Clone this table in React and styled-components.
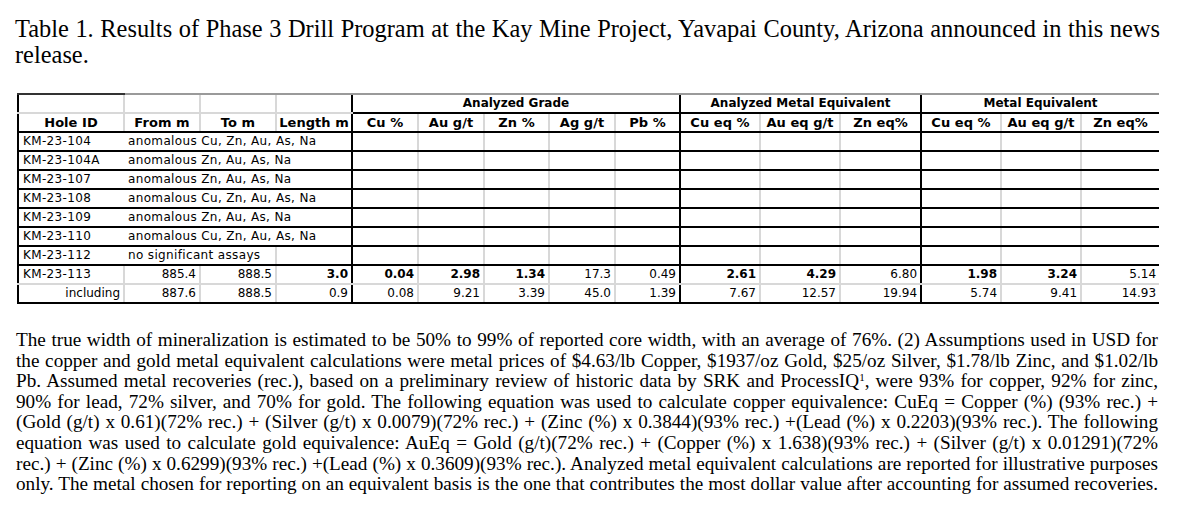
import React from 'react';
import styled, { createGlobalStyle } from 'styled-components';

const GlobalStyle = createGlobalStyle`
  body {
    margin: 0;
    background: #fff;
  }
`;

const LINE = {
  black: '2px solid #000',
  gray: '2px solid #d8d8d8',
  top: '2px solid #9a9a9a',
  dark: '2px solid #333',
  none: 'none',
};

// left border of each column: thick black at group edges, light grid elsewhere
const COL_LEFT = ['black', 'gray', 'gray', 'gray', 'black', 'gray', 'gray', 'gray', 'gray', 'black', 'gray', 'gray', 'black', 'gray', 'gray'];
const COL_WIDTHS = [106, 76, 76, 76, 66, 66, 65, 66, 65, 80, 80, 81, 80, 80, 78];

const Page = styled.div`
  width: 1183px;
  box-sizing: border-box;
  padding: 16px 0 0 15px;
  font-family: "Liberation Serif", "Times New Roman", serif;
  color: #000;
`;

const Caption = styled.div`
  width: 1145px;
  margin: 0 0 25px;
  font-size: 24.4px;
  line-height: 26px;
`;

// a printed line that is stretched to the full measure, as in the source document
const Justified = styled.span`
  display: block;
  white-space: nowrap;
  text-align: justify;
  text-align-last: ${(p) => (p.$last ? 'left' : 'justify')};
`;

const Grid = styled.table`
  margin-left: 2px;
  width: 1141px;
  border-collapse: collapse;
  table-layout: fixed;
  font-family: "DejaVu Sans", Tahoma, sans-serif;
  font-size: 12px;
  color: #000;
`;

const Cell = styled.td`
  height: 17px;
  padding: 0 3px 0 4px;
  border-left: ${(p) => LINE[p.$left || 'none']};
  border-bottom: ${(p) => LINE[p.$bottom || 'none']};
  text-align: ${(p) => p.$align || 'right'};
  font-weight: ${(p) => (p.$bold ? 700 : 400)};
  letter-spacing: ${(p) => (p.$align === 'left' ? '0.35px' : '0')};
  white-space: nowrap;
  overflow: visible;
  line-height: 17px;
`;

const GroupHead = styled.th`
  height: 17px;
  padding: 0;
  border-left: ${(p) => LINE[p.$left || 'none']};
  border-top: ${(p) => LINE[p.$top || 'top']};
  border-bottom: ${(p) => LINE[p.$bottom || 'black']};
  font-size: 12px;
  font-weight: 700;
  text-align: center;
  line-height: 17px;
`;

const ColHead = styled.th`
  height: 17px;
  padding: 0;
  border-left: ${(p) => LINE[p.$left]};
  border-bottom: ${LINE.black};
  font-size: 13px;
  font-weight: 700;
  letter-spacing: 0.05px;
  text-align: center;
  white-space: nowrap;
  line-height: 17px;
`;

const Notes = styled.div`
  width: 1142px;
  padding-top: 26px;
  padding-left: 1px;
  font-size: 19.2px;
  line-height: 20.6px;
`;

const Sup = styled.sup`
  font-size: 11px;
  line-height: 0;
  vertical-align: 6px;
`;

const HEADS = ['Hole ID', 'From m', 'To m', 'Length m', 'Cu %', 'Au g/t', 'Zn %', 'Ag g/t', 'Pb %', 'Cu eq %', 'Au eq g/t', 'Zn eq%', 'Cu eq %', 'Au eq g/t', 'Zn eq%'];

const NOTE_ROWS = [
  ['KM-23-104', 'anomalous Cu, Zn, Au, As, Na'],
  ['KM-23-104A', 'anomalous Zn, Au, As, Na'],
  ['KM-23-107', 'anomalous Zn, Au, As, Na'],
  ['KM-23-108', 'anomalous Cu, Zn, Au, As, Na'],
  ['KM-23-109', 'anomalous Zn, Au, As, Na'],
  ['KM-23-110', 'anomalous Cu, Zn, Au, As, Na'],
];

const RESULTS = [
  {
    id: 'KM-23-113',
    align: 'left',
    bottom: 'gray',
    values: [['885.4'], ['888.5'], ['3.0', true], ['0.04', true], ['2.98', true], ['1.34', true], ['17.3'], ['0.49'], ['2.61', true], ['4.29', true], ['6.80'], ['1.98', true], ['3.24', true], ['5.14']],
  },
  {
    id: 'including',
    align: 'right',
    bottom: 'black',
    values: [['887.6'], ['888.5'], ['0.9'], ['0.08'], ['9.21'], ['3.39'], ['45.0'], ['1.39'], ['7.67'], ['12.57'], ['19.94'], ['5.74'], ['9.41'], ['14.93']],
  },
];

const NOTE_LINES = [
  'The true width of mineralization is estimated to be 50% to 99% of reported core width, with an average of 76%. (2) Assumptions used in USD for',
  'the copper and gold metal equivalent calculations were metal prices of $4.63/lb Copper, $1937/oz Gold, $25/oz Silver, $1.78/lb Zinc, and $1.02/lb',
  <>Pb. Assumed metal recoveries (rec.), based on a preliminary review of historic data by SRK and ProcessIQ<Sup>1</Sup>, were 93% for copper, 92% for zinc,</>,
  '90% for lead, 72% silver, and 70% for gold. The following equation was used to calculate copper equivalence: CuEq = Copper (%) (93% rec.) +',
  '(Gold (g/t) x 0.61)(72% rec.) + (Silver (g/t) x 0.0079)(72% rec.) + (Zinc (%) x 0.3844)(93% rec.) +(Lead (%) x 0.2203)(93% rec.). The following',
  'equation was used to calculate gold equivalence: AuEq = Gold (g/t)(72% rec.) + (Copper (%) x 1.638)(93% rec.) + (Silver (g/t) x 0.01291)(72%',
  'rec.) + (Zinc (%) x 0.6299)(93% rec.) +(Lead (%) x 0.3609)(93% rec.). Analyzed metal equivalent calculations are reported for illustrative purposes',
  'only. The metal chosen for reporting on an equivalent basis is the one that contributes the most dollar value after accounting for assumed recoveries.',
];

const EmptyCells = ({ from, bottom }) =>
  COL_LEFT.slice(from).map((left, i) => <Cell key={i} $left={left} $bottom={bottom} />);

export default function App() {
  return (
    <Page>
      <GlobalStyle />
      <Caption>
        <Justified>Table 1. Results of Phase 3 Drill Program at the Kay Mine Project, Yavapai County, Arizona announced in this news</Justified>
        <Justified $last>release.</Justified>
      </Caption>

      <Grid>
        <colgroup>
          {COL_WIDTHS.map((w, i) => (
            <col key={i} style={{ width: w }} />
          ))}
        </colgroup>
        <thead>
          <tr>
            <GroupHead $left="black" $top="dark" $bottom="gray" />
            <GroupHead $left="gray" $bottom="gray" />
            <GroupHead $left="gray" $bottom="gray" />
            <GroupHead $left="gray" $bottom="gray" />
            <GroupHead $left="black" colSpan={5}>Analyzed Grade</GroupHead>
            <GroupHead $left="black" colSpan={3}>Analyzed Metal Equivalent</GroupHead>
            <GroupHead $left="black" colSpan={3}>Metal Equivalent</GroupHead>
          </tr>
          <tr>
            {HEADS.map((h, i) => (
              <ColHead key={h + i} $left={COL_LEFT[i]}>{h}</ColHead>
            ))}
          </tr>
        </thead>
        <tbody>
          {NOTE_ROWS.map(([id, note]) => (
            <tr key={id}>
              <Cell $left="black" $bottom="black" $align="left">{id}</Cell>
              <Cell colSpan={3} $bottom="black" $align="left">{note}</Cell>
              <EmptyCells from={4} bottom="black" />
            </tr>
          ))}
          <tr>
            <Cell $left="black" $bottom="black" $align="left">KM-23-112</Cell>
            <Cell colSpan={2} $bottom="black" $align="left">no significant assays</Cell>
            <EmptyCells from={3} bottom="black" />
          </tr>
          {RESULTS.map((row) => (
            <tr key={row.id}>
              <Cell $left="black" $bottom={row.bottom} $align={row.align}>{row.id}</Cell>
              {row.values.map(([v, bold], i) => (
                <Cell key={i} $left={COL_LEFT[i + 1]} $bottom={row.bottom} $bold={bold}>{v}</Cell>
              ))}
            </tr>
          ))}
        </tbody>
      </Grid>

      <Notes>
        {NOTE_LINES.map((line, i) => (
          <Justified key={i}>{line}</Justified>
        ))}
      </Notes>
    </Page>
  );
}
